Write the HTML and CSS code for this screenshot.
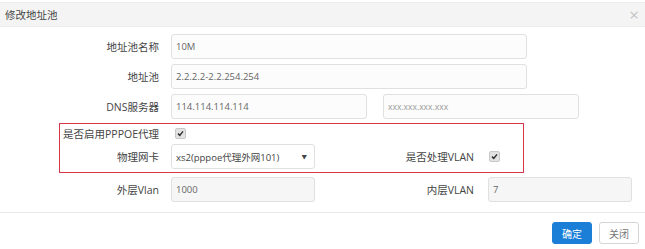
FILE: index.html
```html
<!DOCTYPE html>
<html>
<head>
  <title>修改地址池</title>
  <meta charset="UTF-8" />
  <link rel="stylesheet" href="styles.css">
</head>
<body>
  <div class="modal">
    <div class="modal-header">
      <span class="title">修改地址池</span>
      <span class="close">×</span>
    </div>

    <div class="modal-body">
      <div class="row">
        <label class="lbl">地址池名称</label>
        <div class="field wide">10M</div>
      </div>
      <div class="row">
        <label class="lbl">地址池</label>
        <div class="field wide">2.2.2.2-2.2.254.254</div>
      </div>
      <div class="row">
        <label class="lbl">DNS服务器</label>
        <div class="field half">114.114.114.114</div>
        <div class="field half second placeholder">xxx.xxx.xxx.xxx</div>
      </div>

      <!-- pppoe block, outlined in red -->
      <div class="pppoe">
        <div class="row short">
          <label class="lbl">是否启用PPPOE代理</label>
          <span class="check"><svg width="9" height="9" viewBox="0 0 9 9"><path d="M2 4.6 L3.8 6.4 L7 2.4" fill="none" stroke="#333" stroke-width="1.5"/></svg></span>
        </div>
        <div class="row">
          <label class="lbl">物理网卡</label>
          <div class="field small select">xs2(pppoe代理外网101)<span class="caret">▼</span></div>
          <label class="lbl2">是否处理VLAN</label>
          <span class="check right"><svg width="9" height="9" viewBox="0 0 9 9"><path d="M2 4.6 L3.8 6.4 L7 2.4" fill="none" stroke="#333" stroke-width="1.5"/></svg></span>
        </div>
      </div>

      <div class="row last">
        <label class="lbl">外层Vlan</label>
        <div class="field small grey">1000</div>
        <label class="lbl2">内层VLAN</label>
        <div class="field small grey">7</div>
      </div>
    </div>

    <div class="modal-footer">
      <button class="btn primary">确定</button>
      <button class="btn">关闭</button>
    </div>
  </div>
</body>
</html>
```

FILE: styles.css
```css
body {
  margin: 0;
  background: #fff;
  font-family: "Open Sans", "Noto Sans CJK SC", sans-serif;
  font-size: 12px;
  color: #333;
}

.modal-header {
  height: 23px;
  margin-top: 2px;
  padding: 0 6px 0 5px;
  background: #f4f4f4;
  border-top: 1px solid #ececec;
  border-bottom: 1px solid #ececec;
  display: flex;
  align-items: center;
  justify-content: space-between;
}

.title {
  font-size: 10.5px;
  color: #444;
}

.close {
  font-size: 17px;
  color: #c4c4c4;
  line-height: 1;
}

.modal-body {
  padding-top: 7px;
}

.row {
  display: flex;
  align-items: center;
  height: 25px;
  margin-bottom: 5px;
}

.lbl,
.lbl2 {
  text-align: right;
  font-size: 10.5px;
  color: #444;
  white-space: nowrap;
}

.lbl {
  width: 159px;
  padding-right: 12px;
}

.lbl2 {
  width: 159px;
  padding-right: 14px;
}

.field {
  border: 1px solid #e0e0e0;
  border-radius: 3px;
  background: #fcfcfc;
  padding: 0 4px;
  box-sizing: border-box;
  height: 25px;
  display: flex;
  align-items: center;
  font-size: 9.5px;
  color: #666;
}

.wide { width: 356px; }
.half { width: 196px; }
.half.second { margin-left: 16px; }
.small { width: 144px; }
.grey { background: #f6f6f6; }

.placeholder {
  font-size: 8.5px;
  color: #999;
}

.select {
  justify-content: space-between;
  padding-right: 7px;
  background: #fff;
  color: #444;
  font-size: 9.5px;
}

.caret {
  font-size: 5.5px;
  color: #444;
}

.check {
  display: inline-flex;
  width: 9px;
  height: 9px;
  margin-left: 4px;
  background: #e2e2e2;
  border: 1px solid #c8c8c8;
  border-radius: 2px;
}

.check.right {
  margin-left: 1px;
}

.pppoe {
  margin: -1px 0 0 59px;
  width: 463px;
  border: 1px solid #d9364a;
  padding-bottom: 3px;
}

.pppoe .lbl {
  width: 99px;
}

.pppoe .row.short {
  height: 18px;
  margin-bottom: 2px;
}

.pppoe .row {
  margin-bottom: 0;
}

.row.last {
  margin-top: 4px;
  margin-bottom: 10px;
}

.modal-footer {
  border-top: 1px solid #e8e8e8;
  padding: 9px 6px 0 0;
  display: flex;
  justify-content: flex-end;
  gap: 7px;
}

.btn {
  width: 40px;
  height: 22px;
  border: 1px solid #d5d5d5;
  border-radius: 3px;
  background: #fff;
  font-family: "Noto Sans CJK SC", sans-serif;
  font-size: 10px;
  color: #777;
  padding: 0;
}

.btn.primary {
  background: #1b7fd8;
  border-color: #1b7fd8;
  color: #fff;
}
```
